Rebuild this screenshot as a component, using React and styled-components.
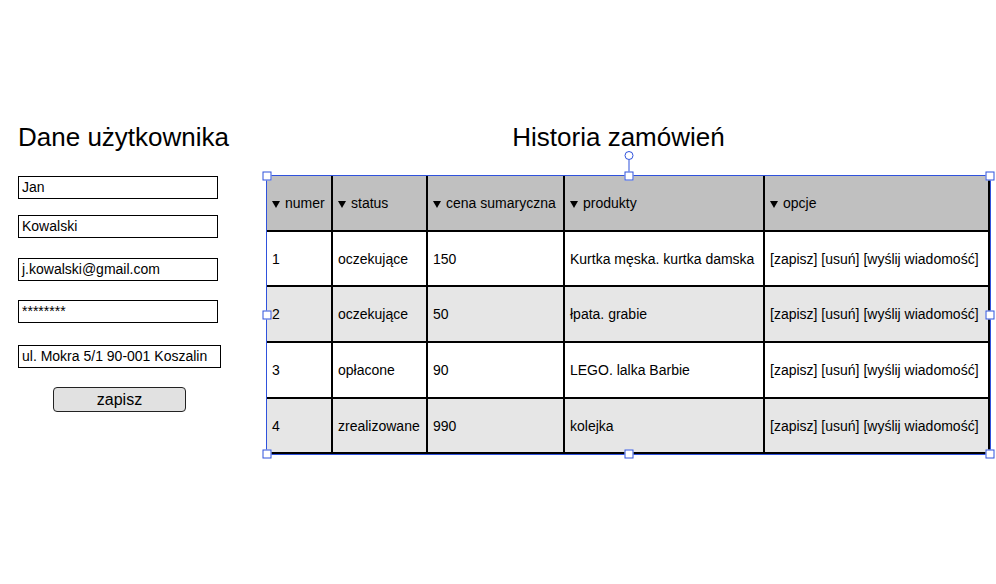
import React from "react";
import styled, { createGlobalStyle } from "styled-components";

const Global = createGlobalStyle`
  html, body { margin: 0; padding: 0; background: #fff; }
  body { font-family: "Liberation Sans", Arial, sans-serif; color: #000; }
`;

const Page = styled.div`
  display: flex;
  align-items: flex-start;
  padding: 122px 0 0 18px;
  width: 996px;
  height: 584px;
  box-sizing: border-box;
`;

const LeftCol = styled.div`
  width: 203px;
  display: flex;
  flex-direction: column;
`;

const Title = styled.h1`
  margin: 0;
  font-size: 26px;
  font-weight: normal;
  line-height: 30px;
  white-space: nowrap;
  text-align: ${(p) => (p.$center ? "center" : "left")};
  padding-right: ${(p) => (p.$center ? "20px" : "0")};
`;

const Field = styled.div`
  box-sizing: border-box;
  width: ${(p) => p.$w || 200}px;
  height: 23px;
  margin-top: ${(p) => p.$mt}px;
  border: 1px solid #000;
  font-size: 14px;
  line-height: 21px;
  padding-left: 3px;
  white-space: nowrap;
  overflow: hidden;
`;

const Button = styled.button`
  box-sizing: border-box;
  align-self: flex-start;
  margin: 19px 0 0 35px;
  width: 133px;
  height: 25px;
  border: 1px solid #222;
  border-radius: 4px;
  background: #e1e1e1;
  font-family: "Liberation Sans", Arial, sans-serif;
  font-size: 16px;
  padding: 0;
  color: #000;
`;

const RightCol = styled.div`
  margin-left: 45px;
  width: 725px;
  display: flex;
  flex-direction: column;
`;

const Selection = styled.div`
  position: relative;
  margin-top: 23px;
  border: 1px solid #2f52dc;
  width: 725px;
  box-sizing: border-box;
`;

const Table = styled.table`
  border-collapse: separate;
  border-spacing: 0;
  table-layout: fixed;
  width: 723px;
  font-size: 14px;
`;

const Row = styled.tr`
  background: ${(p) => (p.$head ? "#c0c0c0" : p.$alt ? "#e6e6e6" : "#ffffff")};
`;

const Cell = styled.td`
  box-sizing: border-box;
  height: ${(p) => p.$h || 56}px;
  padding: 0 0 0 5px;
  border-right: 2px solid #000;
  border-bottom: 2px solid #000;
  white-space: nowrap;
  overflow: hidden;
  vertical-align: middle;
  text-align: left;
  font-weight: normal;
`;

const Tri = styled.span`
  display: inline-block;
  width: 0;
  height: 0;
  border-left: 4px solid transparent;
  border-right: 4px solid transparent;
  border-top: 7px solid #000;
  margin-right: 5px;
  vertical-align: 0px;
`;

const Handle = styled.div`
  position: absolute;
  width: 9px;
  height: 9px;
  box-sizing: border-box;
  background: #fff;
  border: 1px solid #2f52dc;
  left: ${(p) => p.$x};
  top: ${(p) => p.$y};
  transform: translate(-50%, -50%);
`;

const Rotate = styled.div`
  position: absolute;
  left: 50%;
  top: -25px;
  transform: translateX(-50%);
  width: 9px;
  height: 21px;
  display: flex;
  flex-direction: column;
  align-items: center;
`;

const RotateKnob = styled.div`
  width: 9px;
  height: 9px;
  box-sizing: border-box;
  border: 1px solid #2f52dc;
  border-radius: 50%;
  background: #fff;
`;

const RotateStem = styled.div`
  width: 1px;
  flex: 1;
  background: #2f52dc;
`;

const cols = [66, 95, 137, 200, 225];
const rowHeights = [55, 56, 56, 55];
const headers = ["numer", "status", "cena sumaryczna", "produkty", "opcje"];
const rows = [
  ["1", "oczekujące", "150", "Kurtka męska. kurtka damska"],
  ["2", "oczekujące", "50", "łpata. grabie"],
  ["3", "opłacone", "90", "LEGO. lalka Barbie"],
  ["4", "zrealizowane", "990", "kolejka"],
];
const options = "[zapisz] [usuń] [wyślij wiadomość]";

export default function App() {
  return (
    <>
      <Global />
      <Page>
        <LeftCol>
          <Title>Dane użytkownika</Title>
          <Field $mt={24}>Jan</Field>
          <Field $mt={16}>Kowalski</Field>
          <Field $mt={20}>j.kowalski@gmail.com</Field>
          <Field $mt={19}>********</Field>
          <Field $mt={22} $w={203}>ul. Mokra 5/1 90-001 Koszalin</Field>
          <Button>zapisz</Button>
        </LeftCol>
        <RightCol>
          <Title $center>Historia zamówień</Title>
          <Selection>
            <Table>
              <colgroup>
                {cols.map((w, i) => (
                  <col key={i} style={{ width: w }} />
                ))}
              </colgroup>
              <thead>
                <Row $head>
                  {headers.map((h) => (
                    <Cell as="th" key={h} $h={56}>
                      <Tri />
                      {h}
                    </Cell>
                  ))}
                </Row>
              </thead>
              <tbody>
                {rows.map((r, i) => (
                  <Row key={r[0]} $alt={i % 2 === 1}>
                    {r.map((c, j) => (
                      <Cell key={j} $h={rowHeights[i]}>
                        {c}
                      </Cell>
                    ))}
                    <Cell $h={rowHeights[i]}>{options}</Cell>
                  </Row>
                ))}
              </tbody>
            </Table>
            <Rotate>
              <RotateKnob />
              <RotateStem />
            </Rotate>
            <Handle $x="0%" $y="0%" />
            <Handle $x="50%" $y="0%" />
            <Handle $x="100%" $y="0%" />
            <Handle $x="0%" $y="50%" />
            <Handle $x="100%" $y="50%" />
            <Handle $x="0%" $y="100%" />
            <Handle $x="50%" $y="100%" />
            <Handle $x="100%" $y="100%" />
          </Selection>
        </RightCol>
      </Page>
    </>
  );
}
